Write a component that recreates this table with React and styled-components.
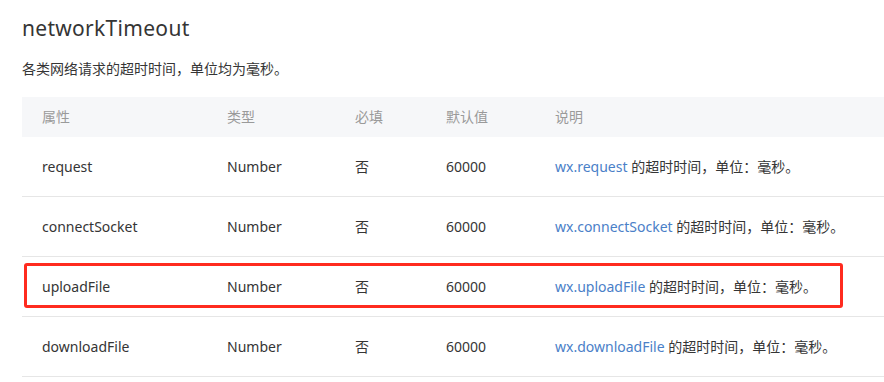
import React from "react";
import styled, { createGlobalStyle } from "styled-components";

const COLORS = {
  text: "#353535",
  muted: "#9a9a9a",
  link: "#4a80c8",
  headerBg: "#f6f7f9",
  border: "#e6e6e6",
  red: "#ff2b1f",
};

const GlobalStyle = createGlobalStyle`
  body {
    margin: 0;
    background: #fff;
    overflow: hidden;
    font-family: "Noto Sans", "Noto Sans CJK SC", sans-serif;
    color: ${COLORS.text};
  }
`;

const ROWS = [
  { name: "request", highlight: false },
  { name: "connectSocket", highlight: false },
  { name: "uploadFile", highlight: true },
  { name: "downloadFile", highlight: false },
];

const App = () => {
  return (
    <>
      <GlobalStyle />
      <Page>
        <Title>networkTimeout</Title>
        <Intro>各类网络请求的超时时间，单位均为毫秒。</Intro>
        <Table>
          <HeaderRow>
            <Cell>属性</Cell>
            <Cell>类型</Cell>
            <Cell>必填</Cell>
            <Cell>默认值</Cell>
            <Cell>说明</Cell>
          </HeaderRow>
          {ROWS.map((row) => (
            <Row key={row.name}>
              <Cell>{row.name}</Cell>
              <Cell>Number</Cell>
              <Cell>否</Cell>
              <Cell>60000</Cell>
              <Cell>
                <Link>wx.{row.name}</Link> 的超时时间，单位：毫秒。
              </Cell>
              {row.highlight && <Highlight />}
            </Row>
          ))}
        </Table>
      </Page>
    </>
  );
};

const Page = styled.div`
  padding: 13px 0 0 22px;
`;

const Title = styled.h2`
  margin: 0;
  font-size: 21px;
  font-weight: 400;
  line-height: 30px;
  letter-spacing: 0.3px;
`;

const Intro = styled.p`
  margin: 17px 0 0;
  font-size: 14px;
  line-height: 18px;
`;

const Table = styled.div`
  margin-top: 19px;
  width: 880px;
`;

const RowBase = styled.div`
  position: relative;
  display: grid;
  grid-template-columns: 185px 128px 91px 109px 1fr;
  align-items: center;
`;

const HeaderRow = styled(RowBase)`
  height: 40px;
  background: ${COLORS.headerBg};
  color: ${COLORS.muted};
`;

const Row = styled(RowBase)`
  height: 60px;
  border-bottom: 1px solid ${COLORS.border};
  box-sizing: border-box;
`;

const Cell = styled.div`
  padding-left: 20px;
  font-size: 14px;
  line-height: 20px;
  white-space: nowrap;
`;

const Link = styled.span`
  color: ${COLORS.link};
`;

const Highlight = styled.div`
  position: absolute;
  left: 2px;
  top: 6px;
  width: 819px;
  height: 45px;
  border: 3px solid ${COLORS.red};
  border-radius: 3px;
  box-sizing: border-box;
  pointer-events: none;
`;

export default App;
